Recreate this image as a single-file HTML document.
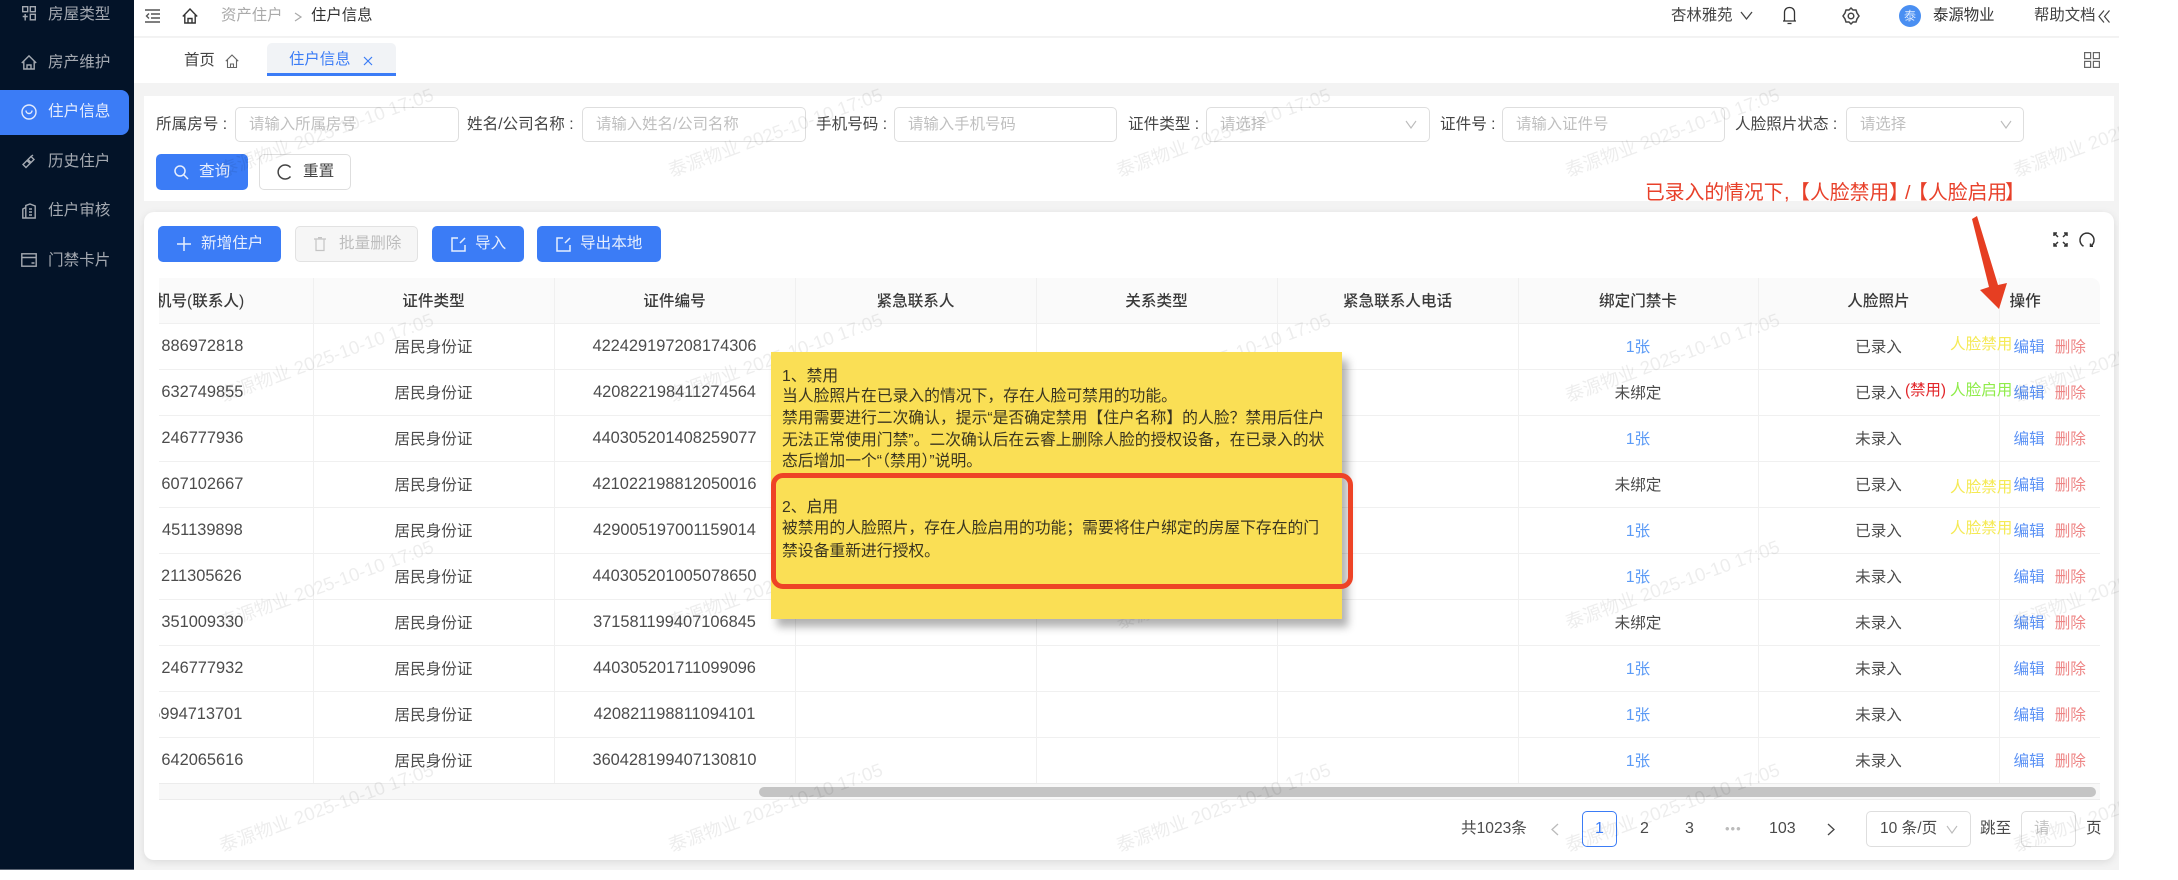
<!DOCTYPE html>
<html lang="zh"><head><meta charset="utf-8"><title>住户信息</title>
<style>
*{box-sizing:border-box;margin:0;padding:0}
html,body{width:2178px;height:880px;overflow:hidden;background:#fff}
body{position:relative;font-family:"Liberation Sans","Noto Sans CJK SC",sans-serif;font-size:15.6px;color:#444;filter:blur(.35px)}
.a{position:absolute;white-space:nowrap}
.t{position:absolute;white-space:nowrap;line-height:22px}
svg{position:absolute;overflow:visible;fill:none}
.side{left:0;top:0;width:134px;height:870px;background:#031328;border-bottom:1px solid #5b6473}
.act{left:0;top:90px;width:129px;height:45px;background:#3b7cf6;border-radius:0 8px 8px 0}
.s{left:48px;color:#a4a9b1}
.i{stroke:#a4a9b1;stroke-width:1.4}
.inp{position:absolute;top:107px;height:35px;border:1px solid #dedede;border-radius:5px;background:#fff;color:#bfbfbf;line-height:34px;padding-left:13px;font-size:15.4px;white-space:nowrap}
.lb{top:114px;color:#444}
.b{position:absolute;border-radius:5px;background:#3b7cf6;color:#e6eefe;line-height:36px;white-space:nowrap}
.tb{position:absolute;left:159px;top:278px;width:1941px;height:505px;overflow:hidden;background:#fff;border-top-right-radius:9px}
table{position:absolute;left:-87px;top:0;width:2028px;border-collapse:collapse;table-layout:fixed}
th{height:45px;background:#fafafa;font-weight:500;color:#3a3a3a;font-size:15.6px;border-right:1px solid #f0f0f0;border-bottom:1px solid #f0f0f0;text-align:center}
td{height:46px;border-right:1px solid #f0f0f0;border-bottom:1px solid #f0f0f0;text-align:center;color:#4c4c4c;white-space:nowrap}
th:last-child,td:last-child{border-right:0}
.n{font-size:16.4px}
.h{visibility:hidden}
.p{padding-left:2px}
.l{color:#5b9af6}
.op{text-align:left;padding-left:14px}
.e{color:#5b92f5;margin-right:10px}.d{color:#ee8686}
.wm{position:absolute;left:134px;top:83px;width:1985px;height:787px;overflow:hidden;pointer-events:none}
.wm span{position:absolute;white-space:nowrap;font-size:18.6px;line-height:22px;margin:4px 0 0 4px;color:rgba(0,0,0,.072);transform-origin:0 100%;transform:rotate(-20deg)}
.note{left:771px;top:352px;width:571px;height:267px;background:#fadf55;box-shadow:6px 8px 8px rgba(0,0,0,.3)}
.nt{left:782px;color:#3a3520;font-size:15.8px;line-height:22px}
.pg{top:818px;color:#4a4a4a}
.r{position:absolute;top:181px;color:#e8402a;font-size:19.8px;line-height:24px;white-space:nowrap}
</style></head><body>

<div class="a" style="left:134px;top:0;width:1985px;height:870px;background:#f3f3f3"></div>
<div class="a" style="left:134px;top:0;width:1985px;height:37px;background:#fff;border-bottom:1px solid #f2f2f2"></div>
<div class="a" style="left:134px;top:38px;width:1985px;height:45px;background:#fff"></div>

<div class="a side"></div>
<div class="a act"></div>
<div class="t s" style="top:4px">房屋类型</div>
<div class="t s" style="top:52px">房产维护</div>
<div class="t" style="left:48px;top:101px;color:#e4ecfd">住户信息</div>
<div class="t s" style="top:151px">历史住户</div>
<div class="t s" style="top:200px">住户审核</div>
<div class="t s" style="top:250px">门禁卡片</div>
<svg class="i" style="left:22px;top:6px" width="14" height="15" viewBox="0 0 14 15"><rect x=".7" y=".7" width="5" height="5"/><rect x="8.3" y=".7" width="5" height="5"/><rect x="8.3" y="8.3" width="5" height="5.500"/><path d="M3.200 8v6.500M.7 10.500h5"/></svg>
<svg class="i" style="left:21px;top:55px" width="16" height="15" viewBox="0 0 16 15"><path d="M.8 8 8 .9 15.200 8M2.800 6.500V14h10.400V6.500M6 14v-4h4v4"/></svg>
<svg class="i" style="left:21px;top:104px" width="16" height="16" viewBox="0 0 16 16"><circle cx="8" cy="8" r="7" stroke="#e4ecfd"/><path d="M5 6.500c0 4 6 4 6 0" stroke="#e4ecfd"/></svg>
<svg class="i" style="left:22px;top:154px" width="14" height="15" viewBox="0 0 14 15"><path d="M1 10.500 5 6.500l3 3-4 4zM6 5.500l3-3 3 3-3 3zM9 2.500l2-1.500"/></svg>
<svg class="i" style="left:22px;top:203px" width="14" height="16" viewBox="0 0 14 16"><path d="M.8 15V6l3-1.500V15zM3.800 15V2.500L8 1l5.200 2V15H.8M7 6h3M7 9h3M7 12h3"/></svg>
<svg class="i" style="left:21px;top:253px" width="16" height="14" viewBox="0 0 16 14"><rect x=".8" y=".8" width="14.400" height="12.400"/><path d="M.8 4.500h14.400M10.500 10h3"/></svg>

<svg style="left:145px;top:9px" width="16" height="14" viewBox="0 0 16 14" stroke="#555" stroke-width="1.400"><path d="M0 1h15M6 5h9M6 9h9M0 13h15M4 4.500 1.500 7 4 9.500"/></svg>
<svg style="left:182px;top:8px" width="16" height="16" viewBox="0 0 16 16" stroke="#333" stroke-width="1.400"><path d="M.8 8.500 8 1l7.200 7.500M2.800 7v8h10.400V7M6 15v-4.500h4V15"/></svg>
<div class="t" style="left:221px;top:5px;color:#aaa;font-size:15.4px">资产住户</div>
<svg style="left:294px;top:12px" width="8" height="10" stroke="#aaa" stroke-width="1.200"><path d="M1 1 7 5 1 9"/></svg>
<div class="t" style="left:311px;top:5px;color:#333;font-size:15.4px">住户信息</div>

<div class="t" style="left:1671px;top:5px;font-size:15.400px;color:#444">杏林雅苑</div>
<svg style="left:1740px;top:11px" width="13" height="9" stroke="#444" stroke-width="1.300"><path d="M1 1 6.500 8 12 1"/></svg>
<svg style="left:1782px;top:6px" width="15" height="19" viewBox="0 0 15 19" stroke="#333" stroke-width="1.300"><path d="M1 15h13M2.500 15V6.500c0-3 2-5 5-5s5 2 5 5V15M5.500 17.500h4"/></svg>
<svg style="left:1842px;top:7px" width="18" height="18" viewBox="0 0 18 18" stroke="#444" stroke-width="1.500"><path d="M9 1l2 2h3l1 3 2 3-2 3-1 3h-3l-2 2-2-2H4l-1-3-2-3 2-3 1-3h3z"/><circle cx="9" cy="9" r="2.800"/></svg>
<div class="a" style="left:1899px;top:5px;width:22px;height:22px;border-radius:50%;background:#4a8ff2;color:#dbe8fd;font-size:12px;line-height:22px;text-align:center">泰</div>
<div class="t" style="left:1933px;top:5px;color:#333;font-size:15.400px">泰源物业</div>
<div class="t" style="left:2034px;top:5px;color:#444;font-size:15.400px">帮助文档</div>
<svg style="left:2098px;top:10px" width="12" height="13" stroke="#444" stroke-width="1.200"><path d="M6 .5 1 6.500 6 12.500M11.500 .5 6.500 6.500 11.500 12.500"/></svg>

<div class="t" style="left:184px;top:50px;color:#444;font-size:15.400px">首页</div>
<svg style="left:225px;top:54px" width="14" height="14" viewBox="0 0 14 14" stroke="#666" stroke-width="1.100"><path d="M.8 7.200 7 1l6.200 6.200M2.500 6v7.500h9V6M5.500 13.500V10h3v3.500"/></svg>
<div class="a" style="left:267px;top:43px;width:129px;height:33px;background:#f1f3f6;border-bottom:3px solid #3b7cf6;border-radius:5px 5px 0 0"></div>
<div class="t" style="left:289px;top:49px;color:#3b7cf6;font-size:15.400px">住户信息</div>
<svg style="left:363px;top:56px" width="10" height="10" stroke="#3b7cf6" stroke-width="1.200"><path d="M1 1l8 8M9 1 1 9"/></svg>
<svg style="left:2084px;top:52px" width="16" height="16" stroke="#666" stroke-width="1.200"><rect x=".6" y=".6" width="6" height="6"/><rect x="9.400" y=".6" width="6" height="6"/><rect x=".6" y="9.400" width="6" height="6"/><rect x="9.400" y="9.400" width="6" height="6"/></svg>

<div class="a" style="left:144px;top:96px;width:1970px;height:105px;background:#fff"></div>
<div class="t lb" style="left:156px">所属房号 :</div>
<div class="inp" style="left:235px;width:224px">请输入所属房号</div>
<div class="t lb" style="left:467px">姓名/公司名称 :</div>
<div class="inp" style="left:582px;width:224px">请输入姓名/公司名称</div>
<div class="t lb" style="left:816px">手机号码 :</div>
<div class="inp" style="left:894px;width:223px">请输入手机号码</div>
<div class="t lb" style="left:1128px">证件类型 :</div>
<div class="inp" style="left:1206px;width:224px">请选择</div>
<svg style="left:1405px;top:120px" width="12" height="9" stroke="#bbb" stroke-width="1.100"><path d="M1 1 6 8l5-7"/></svg>
<div class="t lb" style="left:1440px">证件号 :</div>
<div class="inp" style="left:1502px;width:223px">请输入证件号</div>
<div class="t lb" style="left:1735px">人脸照片状态 :</div>
<div class="inp" style="left:1846px;width:178px">请选择</div>
<svg style="left:2000px;top:120px" width="12" height="9" stroke="#bbb" stroke-width="1.100"><path d="M1 1 6 8l5-7"/></svg>

<div class="b" style="left:156px;top:154px;width:92px;height:36px;padding-left:43px">查询</div>
<svg style="left:174px;top:165px" width="15" height="15" stroke="#e6eefe" stroke-width="1.500"><circle cx="6" cy="6" r="5"/><path d="M9.500 9.500 14 14"/></svg>
<div class="b" style="left:259px;top:154px;width:92px;height:36px;padding-left:43px;background:#fff;border:1px solid #dedede;color:#444;line-height:34px">重置</div>
<svg style="left:277px;top:164px" width="16" height="16" viewBox="0 0 16 16" stroke="#444" stroke-width="1.500"><path d="M13.500 3.500A7 7 0 1 0 13.500 12.500"/></svg>

<div class="a" style="left:144px;top:212px;width:1970px;height:648px;background:#fff;border-radius:10px;box-shadow:0 2px 8px rgba(0,0,0,.1)"></div>

<div class="b" style="left:158px;top:226px;width:123px;height:36px;padding-left:43px">新增住户</div>
<svg style="left:177px;top:237px" width="14" height="14" stroke="#e6eefe" stroke-width="1.500"><path d="M7 0v14M0 7h14"/></svg>
<div class="b" style="left:295px;top:226px;width:123px;height:36px;padding-left:43px;background:#f6f6f6;border:1px solid #e2e2e2;color:#bdbdbd;line-height:34px">批量删除</div>
<svg style="left:314px;top:237px" width="12" height="14" viewBox="0 0 12 14" stroke="#c4c4c4" stroke-width="1.200"><path d="M0 2h12M2 2v11.500h8V2M4 .6h4"/></svg>
<div class="b" style="left:432px;top:226px;width:92px;height:36px;padding-left:43px">导入</div>
<svg style="left:451px;top:237px" width="15" height="15" viewBox="0 0 15 15" stroke="#e6eefe" stroke-width="1.500"><path d="M7 1H1v13h13V8M9 6l5-5"/></svg>
<div class="b" style="left:537px;top:226px;width:124px;height:36px;padding-left:43px">导出本地</div>
<svg style="left:556px;top:237px" width="15" height="15" viewBox="0 0 15 15" stroke="#e6eefe" stroke-width="1.500"><path d="M7 1H1v13h13V8M9 6l5-5"/></svg>

<svg style="left:2053px;top:232px" width="15" height="15" viewBox="0 0 15 15" stroke="#333" stroke-width="1.500"><path d="M1 1l4 4M1 4V1h3M14 1l-4 4M14 4V1h-3M1 14l4-4M1 11v3h3M14 14l-4-4M14 11v3h-3"/></svg>
<svg style="left:2079px;top:232px" width="16" height="15" viewBox="0 0 16 15" stroke="#333" stroke-width="1.500"><path d="M4.500 14.200A7 7 0 1 1 11.500 14.200M11.500 11.500v2.800h2.500"/></svg>

<div class="tb"><table>
<colgroup><col style="width:241px"><col style="width:241px"><col style="width:241px"><col style="width:241px"><col style="width:241px"><col style="width:241px"><col style="width:240px"><col style="width:241px"><col style="width:101px"></colgroup>
<tr><th>手机号(联系人)</th><th>证件类型</th><th>证件编号</th><th>紧急联系人</th><th>关系类型</th><th>紧急联系人电话</th><th>绑定门禁卡</th><th>人脸照片</th><th style="text-align:left;padding-left:10px">操作</th></tr>
<tr><td class="n p"><span class="h">13</span>886972818</td><td>居民身份证</td><td class="n">422429197208174306</td><td></td><td></td><td></td><td class="l">1张</td><td>已录入</td><td class="op"><span class="e">编辑</span><span class="d">删除</span></td></tr>
<tr><td class="n p"><span class="h">15</span>632749855</td><td>居民身份证</td><td class="n">420822198411274564</td><td></td><td></td><td></td><td>未绑定</td><td>已录入</td><td class="op"><span class="e">编辑</span><span class="d">删除</span></td></tr>
<tr><td class="n p"><span class="h">13</span>246777936</td><td>居民身份证</td><td class="n">440305201408259077</td><td></td><td></td><td></td><td class="l">1张</td><td>未录入</td><td class="op"><span class="e">编辑</span><span class="d">删除</span></td></tr>
<tr><td class="n p"><span class="h">13</span>607102667</td><td>居民身份证</td><td class="n">421022198812050016</td><td></td><td></td><td></td><td>未绑定</td><td>已录入</td><td class="op"><span class="e">编辑</span><span class="d">删除</span></td></tr>
<tr><td class="n p"><span class="h">13</span>451139898</td><td>居民身份证</td><td class="n">429005197001159014</td><td></td><td></td><td></td><td class="l">1张</td><td>已录入</td><td class="op"><span class="e">编辑</span><span class="d">删除</span></td></tr>
<tr><td class="n"><span class="h">13</span>211305626</td><td>居民身份证</td><td class="n">440305201005078650</td><td></td><td></td><td></td><td class="l">1张</td><td>未录入</td><td class="op"><span class="e">编辑</span><span class="d">删除</span></td></tr>
<tr><td class="n p"><span class="h">13</span>351009330</td><td>居民身份证</td><td class="n">371581199407106845</td><td></td><td></td><td></td><td>未绑定</td><td>未录入</td><td class="op"><span class="e">编辑</span><span class="d">删除</span></td></tr>
<tr><td class="n p"><span class="h">13</span>246777932</td><td>居民身份证</td><td class="n">440305201711099096</td><td></td><td></td><td></td><td class="l">1张</td><td>未录入</td><td class="op"><span class="e">编辑</span><span class="d">删除</span></td></tr>
<tr><td class="n">15994713701</td><td>居民身份证</td><td class="n">420821198811094101</td><td></td><td></td><td></td><td class="l">1张</td><td>未录入</td><td class="op"><span class="e">编辑</span><span class="d">删除</span></td></tr>
<tr><td class="n p"><span class="h">13</span>642065616</td><td>居民身份证</td><td class="n">360428199407130810</td><td></td><td></td><td></td><td class="l">1张</td><td>未录入</td><td class="op"><span class="e">编辑</span><span class="d">删除</span></td></tr>
</table></div>
<div class="t" style="left:1950px;top:334px;color:#f5ea55">人脸禁用</div>
<div class="t" style="left:1950px;top:477px;color:#f5ea55">人脸禁用</div>
<div class="t" style="left:1950px;top:518px;color:#f5ea55">人脸禁用</div>
<div class="t" style="left:1950px;top:380px;color:#8fec4a">人脸启用</div>
<div class="t" style="left:1905px;top:380px;color:#e2262a;font-size:15.400px">(禁用)</div>

<div class="a" style="left:159px;top:783px;width:1941px;height:17px;background:#f8f8f8;border-top:1px solid #ececec;border-bottom:1px solid #ececec"></div>
<div class="a" style="left:759px;top:787px;width:1337px;height:10px;background:#c4c4c4;border-radius:5px"></div>

<div class="t pg" style="left:1461px">共1023条</div>
<svg style="left:1551px;top:823px" width="8" height="13" stroke="#bbb" stroke-width="1.300"><path d="M7 1 1 6.500 7 12"/></svg>
<div class="a" style="left:1582px;top:811px;width:35px;height:36px;border:1px solid #3b7cf6;border-radius:5px;color:#3b7cf6;line-height:34px;text-align:center;font-size:16px">1</div>
<div class="t pg" style="left:1640px;font-size:16px">2</div>
<div class="t pg" style="left:1685px;font-size:16px">3</div>
<div class="t pg" style="left:1725px;color:#bbb;letter-spacing:1px;font-size:13px">•••</div>
<div class="t pg" style="left:1769px;font-size:16px">103</div>
<svg style="left:1827px;top:823px" width="8" height="13" stroke="#444" stroke-width="1.300"><path d="M1 1 7 6.500 1 12"/></svg>
<div class="a" style="left:1866px;top:811px;width:105px;height:36px;border:1px solid #dedede;border-radius:5px;line-height:34px;padding-left:13px;color:#4a4a4a">10 条/页</div>
<svg style="left:1946px;top:825px" width="12" height="9" stroke="#bbb" stroke-width="1.100"><path d="M1 1 6 8l5-7"/></svg>
<div class="t pg" style="left:1980px">跳至</div>
<div class="a" style="left:2021px;top:811px;width:55px;height:36px;border:1px solid #dedede;border-radius:5px;line-height:34px;padding-left:12px;color:#c4c4c4">请</div>
<div class="t pg" style="left:2086px">页</div>

<div class="wm">
<span style="left:86px;top:73px">泰源物业 2025-10-10 17:05</span><span style="left:535px;top:73px">泰源物业 2025-10-10 17:05</span><span style="left:983px;top:73px">泰源物业 2025-10-10 17:05</span><span style="left:1432px;top:73px">泰源物业 2025-10-10 17:05</span><span style="left:1880px;top:73px">泰源物业 2025-10-10 17:05</span>
<span style="left:86px;top:298px">泰源物业 2025-10-10 17:05</span><span style="left:535px;top:298px">泰源物业 2025-10-10 17:05</span><span style="left:983px;top:298px">泰源物业 2025-10-10 17:05</span><span style="left:1432px;top:298px">泰源物业 2025-10-10 17:05</span><span style="left:1880px;top:298px">泰源物业 2025-10-10 17:05</span>
<span style="left:86px;top:525px">泰源物业 2025-10-10 17:05</span><span style="left:535px;top:525px">泰源物业 2025-10-10 17:05</span><span style="left:983px;top:525px">泰源物业 2025-10-10 17:05</span><span style="left:1432px;top:525px">泰源物业 2025-10-10 17:05</span><span style="left:1880px;top:525px">泰源物业 2025-10-10 17:05</span>
<span style="left:86px;top:748px">泰源物业 2025-10-10 17:05</span><span style="left:535px;top:748px">泰源物业 2025-10-10 17:05</span><span style="left:983px;top:748px">泰源物业 2025-10-10 17:05</span><span style="left:1432px;top:748px">泰源物业 2025-10-10 17:05</span><span style="left:1880px;top:748px">泰源物业 2025-10-10 17:05</span>
</div>

<div class="a note"></div>
<div class="t nt" style="top:366px">1、禁用</div>
<div class="t nt" style="top:386px">当人脸照片在已录入的情况下，存在人脸可禁用的功能。</div>
<div class="t nt" style="top:408px">禁用需要进行二次确认，提示“是否确定禁用【住户名称】的人脸？禁用后住户</div>
<div class="t nt" style="top:430px">无法正常使用门禁”。二次确认后在云睿上删除人脸的授权设备，在已录入的状</div>
<div class="t nt" style="top:451px">态后增加一个“（禁用）”说明。</div>
<div class="t nt" style="top:497px">2、启用</div>
<div class="t nt" style="top:518px">被禁用的人脸照片，存在人脸启用的功能；需要将住户绑定的房屋下存在的门</div>
<div class="t nt" style="top:541px">禁设备重新进行授权。</div>
<div class="a" style="left:771px;top:473px;width:582px;height:116px;border:5px solid #ee4326;border-radius:12px"></div>

<div class="r" style="left:1645px">已录入的情况下</div>
<div class="r" style="left:1784px">,</div>
<div class="r" style="left:1790px">【</div>
<div class="r" style="left:1810px">人脸禁用</div>
<div class="r" style="left:1889px">】</div>
<div class="r" style="left:1905px">/</div>
<div class="r" style="left:1908px">【</div>
<div class="r" style="left:1928px">人脸启用</div>
<div class="r" style="left:2005px">】</div>
<svg style="left:0;top:0" width="2178" height="880"><polygon points="1972,219 1977,216 1998,285 2007,283 1999,309 1980,290 1989,287" fill="#e63e22"/></svg>

</body></html>
